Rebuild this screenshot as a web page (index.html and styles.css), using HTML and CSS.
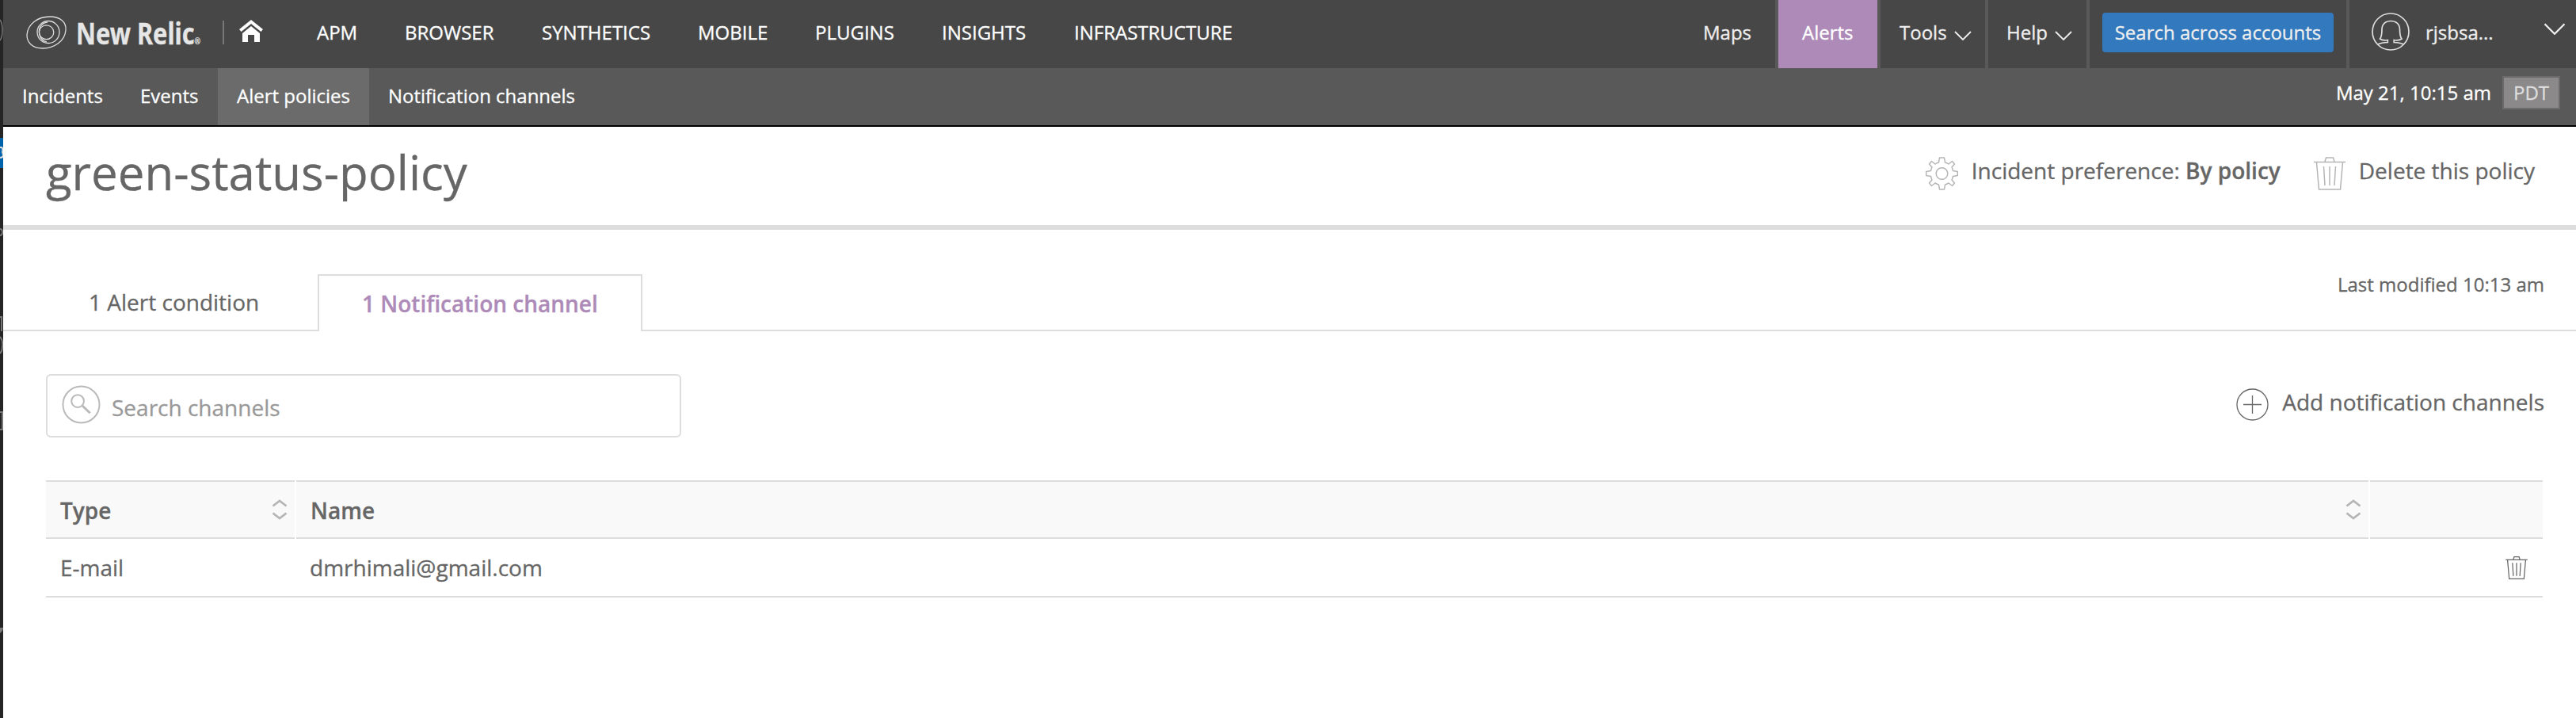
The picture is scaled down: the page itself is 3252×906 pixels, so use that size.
FILE: index.html
```html
<!DOCTYPE html>
<html lang="en">
<head>
<meta charset="utf-8">
<title>green-status-policy</title>
<link rel="stylesheet" href="styles.css">
</head>
<body>
<svg width="0" height="0" class="defs">
  <symbol id="trash" viewBox="0 0 40 42"><path d="M0 6.500h40M14 6l1.500-5h9L26 6M3.500 7l3 34h27l3-34M12.500 12l1.500 24M20 12v24M27.500 12L26 36" fill="none" stroke="currentColor"/></symbol>
  <symbol id="sort" viewBox="0 0 20 26"><path d="M1.500 8.500L10 2l8.500 6.500M1.500 17.500L10 24l8.500-6.500" fill="none" stroke="#b5b5b5" stroke-width="2.800"/></symbol>
  <symbol id="chev" viewBox="0 0 22 12"><path d="M1 1l10 10L21 1" fill="none" stroke="currentColor" stroke-width="1.800"/></symbol>
</svg>
<div class="app">
  <aside class="edge">
    <svg width="4" height="906" viewBox="0 0 4 906">
      <path d="M0 25q3 4 3 13t-3 13" fill="none" stroke="#777" stroke-width="1.500"/>
      <rect y="174" width="4" height="38" fill="#0064ac"/><path d="M0 186h2q2 1 1 6q3 7-3 7" fill="none" stroke="#dcdcdc" stroke-width="2"/>
      <path d="M0 289q3 0 3 4t-3 4M0 400h2v18M0 425q4 4 3 12q0 6-3 9M0 520h3v22h-3" fill="none" stroke="#777" stroke-width="2"/>
      <path d="M0 792h4q0 4-4 7z" fill="#777"/>
    </svg>
  </aside>
  <div class="page">
    <header class="topbar">
      <a class="logo">
        <svg width="52" height="42" viewBox="0 0 52 42" fill="none" stroke="#dedede" stroke-width="1.300">
          <path d="M30 1C43 1 51 8 50 18C49 32 35 41 21 41C8 41 1 34 1 24C2 10 15 1 30 1Z"/>
          <ellipse cx="28" cy="20.500" rx="14" ry="14"/><ellipse cx="25.600" cy="20.700" rx="9.200" ry="8.900"/><path d="M27 8C18 9 15 17 17 24C18 28 21 32 26 33"/>
        </svg>
        <span class="brand">New Relic<small>®</small></span>
      </a>
      <i class="bar"></i>
      <svg class="home" width="30" height="28" viewBox="0 0 30 28" fill="#fff"><path d="M15 0l15 12-2.500 3L15 5 2.500 15 0 12z"/><path d="M15 8l11 9v11h-7v-9h-8v9H4V17z"/></svg>
      <nav class="products"><a>APM</a><a>BROWSER</a><a>SYNTHETICS</a><a>MOBILE</a><a>PLUGINS</a><a>INSIGHTS</a><a>INFRASTRUCTURE</a></nav>
      <nav class="tools">
        <a class="t-maps">Maps</a>
        <a class="t-alerts">Alerts</a>
        <a class="t-tools">Tools<svg width="22" height="12"><use href="#chev"/></svg></a>
        <a class="t-help">Help<svg width="22" height="12"><use href="#chev"/></svg></a>
        <div class="t-search"><button>Search across accounts</button></div>
        <div class="t-user">
          <svg class="avatar" width="48" height="48" viewBox="0 0 48 48" fill="none" stroke="#dedede" stroke-width="1.700"><circle cx="24" cy="24" r="23"/><path d="M7.700 40Q12 37.800 20.300 37.500V34.500Q14 35.500 10.500 33Q13 30 13 21C13 14 18 10.500 24.200 10.500S35.500 14 35.500 21Q35.500 30 38 33Q34.500 35.500 28.200 34.500V37.500Q36 37.800 40.300 40"/></svg>
          <span>rjsbsa...</span>
          <svg class="down" width="28" height="15" viewBox="0 0 22 12"><use href="#chev"/></svg>
        </div>
      </nav>
    </header>
    <div class="subbar">
      <a class="s1">Incidents</a><a class="s2">Events</a><a class="s3 on">Alert policies</a><a class="s4">Notification channels</a>
      <div class="clock"><span>May 21, 10:15 am</span><b>PDT</b></div>
    </div>
    <section class="titlebar">
      <h1>green-status-policy</h1>
      <div class="actions">
        <svg class="gear" width="41" height="42" viewBox="-20.500 -21 41 42" fill="none" stroke="#b5b5b5" stroke-width="1.500" stroke-linejoin="round"><path d="M-3-20H3L4-14Q7-13.300 8.500-12L13-15.500 16-12 12.500-8Q13.800-5.500 14-3.500L19.800-2.500V2.500L14 3.500Q13.500 6 12.500 8L16 12 13 15.500 8.500 12Q6 13.500 4 14L3 20H-3L-4 14Q-6 13.500-8.500 12L-13 15.500-16 12-12.500 8Q-13.500 6-14 3.500L-19.800 2.500V-2.500L-14-3.500Q-13.800-5.500-12.500-8L-16-12-13-15.500-8.500-12Q-7-13.300-4-14Z"/><circle r="7.300"/></svg>
        <span class="pref">Incident preference: <b>By policy</b></span>
        <svg class="bin" width="40" height="42"><use href="#trash"/></svg>
        <span class="del">Delete this policy</span>
      </div>
    </section>
    <section class="tabs">
      <a class="tab">1 Alert condition</a><a class="tab on">1 Notification channel</a>
      <span class="modified">Last modified 10:13 am</span>
    </section>
    <main>
      <div class="filter">
        <label class="search">
          <svg width="49" height="49" viewBox="0 0 50 50" fill="none" stroke="#b9b9b9" stroke-width="2"><circle cx="25" cy="25" r="23.500"/><circle cx="20.500" cy="20.500" r="8"/><path d="M26.500 26.500l10 9.500" stroke-width="3"/></svg>
          <span>Search channels</span>
        </label>
        <a class="add">
          <svg width="41" height="41" viewBox="0 0 41 41" fill="none" stroke="#666" stroke-width="1.300"><circle cx="20.500" cy="20.500" r="19.500"/><path d="M9 20.500h23M20.500 9v23"/></svg>
          <span>Add notification channels</span>
        </a>
      </div>
      <div class="table">
        <div class="row head">
          <div class="c"><span>Type</span><svg width="20" height="26"><use href="#sort"/></svg></div>
          <div class="c"><span>Name</span><svg width="20" height="26"><use href="#sort"/></svg></div>
          <div class="c"></div>
        </div>
        <div class="row">
          <div class="c">E-mail</div><div class="c mail">dmrhimali@gmail.com</div>
          <div class="c end"><svg width="28" height="29" viewBox="0 0 40 42"><use href="#trash"/></svg></div>
        </div>
      </div>
    </main>
  </div>
</div>
</body>
</html>
```
FILE: styles.css
```css
* { box-sizing: border-box; }
body { margin: 0; background: #fff; color: #666; font: 28px/40px "Open Sans", sans-serif; -webkit-text-stroke: .3px; }
.defs { display: block; position: absolute; }
svg { display: block; flex: none; }
.app { display: flex; width: 3252px; height: 906px; overflow: hidden; white-space: nowrap; }
.edge { width: 4px; background: #252525; }
.page { flex: 1; min-width: 0; }

.topbar { display: flex; align-items: center; height: 86px; background: #474747; color: #fff; font-size: 24px; padding-bottom: 5px; }
.logo { display: flex; align-items: center; width: 275px; padding-left: 29px; gap: 11px; }
.brand { color: #e6e6e6; font: 700 37px/40px "Noto Sans", sans-serif; padding-top: 3px; transform: scaleX(.83); transform-origin: left; }
.brand small { font-size: 11px; line-height: 1; font-weight: 400; }
.bar { width: 2px; height: 30px; background: #777; margin: 0 19px 0 2px; }
.home { margin-bottom: 3px; }
.products { display: grid; grid-template-columns: 111px 173px 197px 148px 160px 167px 201px; margin-left: 68px; }
.tools { display: flex; align-self: flex-start; margin-left: auto; height: 86px; line-height: 81px; color: #eee; }
.tools > * { display: flex; border-left: 4px solid #595959; height: 86px; }
.tools .t-maps { width: 91px; border: 0; }
.t-alerts { width: 129px; padding-left: 30px; background: #ad8ab8; color: #fff; }
.t-tools { width: 136px; padding-left: 24px; }
.t-help { width: 128px; padding-left: 23px; }
.t-tools svg, .t-help svg { margin: 39px 0 0 9px; }
.t-search { width: 328px; padding: 16px 0 0 16px; }
.t-search button { width: 292px; height: 50px; border: 0; border-radius: 4px; padding: 0; background: #3279be; color: #eee; font: 24px/48px "Open Sans", sans-serif; }
.t-user { width: 290px; padding-left: 28px; }
.avatar { margin: 16px 20px 0 0; }
.down { margin: 29px 0 0 63px; }

.subbar { display: flex; height: 74px; background: #595959; border-bottom: 2px solid #000; color: #fff; font-size: 24px; line-height: 70px; }
.s1 { width: 149px; padding-left: 24px; }
.s2 { width: 122px; padding-left: 24px; }
.s3 { width: 191px; padding-left: 24px; }
.s4 { padding-left: 24px; }
.subbar .on { background: #6b6b6b; }
.clock { display: flex; align-items: flex-start; margin-left: auto; padding: 10px 20px 0 0; line-height: 42px; }
.clock b { width: 73px; height: 42px; margin-left: 14px; border: 2px solid #6b6b6b; background: #8b898a; color: #ddd; font-weight: 400; text-align: center; line-height: 38px; }

.titlebar { display: flex; justify-content: space-between; height: 130px; border-bottom: 6px solid #ddd; padding-left: 54px; }
h1 { margin: 0; font-size: 60px; line-height: 114px; font-weight: 400; }
.actions { display: flex; padding: 38px 52px 0 0; line-height: 34px; }
.pref { margin: 0 42px 0 17px; }
.pref b { font-weight: 600; }
.bin { color: #b5b5b5; stroke-width: 1.500px; margin-right: 17px; }

.tabs { display: flex; height: 128px; padding-top: 56px; border-bottom: 2px solid #ddd; }
.tab { width: 397px; padding-left: 108px; line-height: 70px; }
.tab.on { width: 410px; height: 72px; padding-left: 54px; border: 2px solid #ddd; border-bottom: 0; background: #fff; color: #ad8ab8; font-weight: 600; }
.modified { margin-left: auto; padding-right: 40px; font-size: 24px; line-height: 26px; }

main { padding: 54px 42px 0 54px; }
.filter { display: flex; justify-content: space-between; height: 134px; }
.search { display: flex; width: 802px; height: 80px; border: 2px solid #ddd; border-radius: 6px; padding: 12px 0 0 18px; color: #999; }
.search span { margin: 8px 0 0 14px; }
.add { display: flex; padding-top: 18px; margin-right: -2px; }
.add span { margin: -3px 0 0 17px; }
.row { display: grid; grid-template-columns: 314px 2617px 1fr; height: 74px; border-bottom: 2px solid #ddd; line-height: 72px; }
.row .c { padding-left: 18px; }
.head { border: 0; column-gap: 2px; grid-template-columns: 314px 2616px 1fr; font-weight: 600; line-height: 66px; }
.head .c { display: flex; align-items: center; justify-content: space-between; border: solid #ddd; border-width: 2px 0; background: #f9f9f9; padding-right: 9px; }
.head span { padding-top: 2px; }
.row .mail { padding-left: 19px; }
.row .end { padding: 22px 0 0 174px; stroke-width: 1.800px; }
```
